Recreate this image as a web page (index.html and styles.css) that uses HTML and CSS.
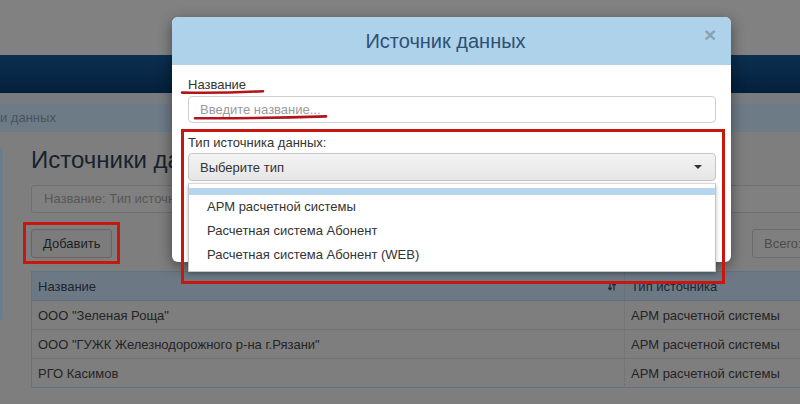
FILE: index.html
```html
<!DOCTYPE html>
<html lang="ru">
<head>
<meta charset="utf-8">
<title>Источники данных</title>
<link rel="stylesheet" href="styles.css">
</head>
<body>
<div class="page">
  <div class="topbar"></div>
  <div class="navbar"></div>
  <div class="subbar"></div>
  <div class="crumbs"><span>и данных</span></div>
  <div class="main">
    <aside class="side"></aside>
    <section class="content">
      <h1 class="title">Источники да</h1>
      <div class="filter">Название: Тип источника</div>
      <div class="toolbar">
        <button class="btn">Добавить</button>
        <button class="btn total">Всего: 3</button>
      </div>
      <table class="grid">
        <thead>
          <tr>
            <th class="c1"><div class="th-in"><span>Название</span>
              <svg class="sort" width="8" height="9" viewBox="0 0 8 9"><path d="M2 0.5v7M0.3 5.6L2 7.8 3.7 5.6M6 8.5v-7M4.3 3.4L6 1.2 7.7 3.4" fill="none" stroke="#222" stroke-width="1.2"/></svg>
            </div></th>
            <th class="c2">Тип источника</th>
          </tr>
        </thead>
        <tbody>
          <tr><td>ООО "Зеленая Роща"</td><td>АРМ расчетной системы</td></tr>
          <tr><td>ООО "ГУЖК Железнодорожного р-на г.Рязани"</td><td>АРМ расчетной системы</td></tr>
          <tr><td>РГО Касимов</td><td>АРМ расчетной системы</td></tr>
        </tbody>
      </table>
    </section>
  </div>
</div>

<div class="modal">
  <div class="modal-head">
    <h2 class="modal-title">Источник данных</h2>
    <span class="close">×</span>
  </div>
  <div class="modal-body">
    <label class="lbl">Название</label>
    <div class="input">Введите название...</div>
    <label class="lbl lbl2">Тип источника данных:</label>
    <div class="select-wrap">
      <div class="select"><span>Выберите тип</span><i class="caret"></i></div>
      <ul class="dropdown">
        <li class="hl"></li>
        <li>АРМ расчетной системы</li>
        <li>Расчетная система Абонент</li>
        <li>Расчетная система Абонент (WEB)</li>
      </ul>
    </div>
  </div>
</div>

<div class="mark mark-add"></div>
<div class="mark mark-type"></div>
<svg class="strokes" width="800" height="404" viewBox="0 0 800 404">
  <path d="M182 92.6 Q222 93.4 263 91.2" fill="none" stroke="#b3141a" stroke-width="2.6" stroke-linecap="round"/>
  <path d="M195 118.2 Q260 118.6 326 116.4" fill="none" stroke="#b3141a" stroke-width="2.6" stroke-linecap="round"/>
</svg>
</body>
</html>
```
FILE: styles.css
```css
html, body {
  margin: 0;
  padding: 0;
}
body {
  width: 800px;
  height: 404px;
  overflow: hidden;
  background: #7e7e7e;
  font-family: "Liberation Sans", Arial, sans-serif;
  font-size: 13px;
  color: #262626;
  position: relative;
}
.page {
  width: 800px;
}
.topbar {
  height: 55px;
  background: #818181;
}
.navbar {
  height: 38px;
  background: linear-gradient(#0c2f50, #03203a);
}
.subbar {
  height: 11px;
  background: #787c80;
}
.crumbs {
  height: 28px;
  background: #6d7b87;
  color: #48535d;
  font-size: 13px;
  line-height: 28px;
  white-space: nowrap;
}
.main {
  display: flex;
}
.side {
  flex: none;
  width: 3px;
  height: 173px;
  margin-top: 15px;
  background: #6a7d8f;
  border-radius: 0 3px 3px 0;
}
.content {
  flex: none;
  width: 800px;
  margin-left: 28px;
  padding-top: 14px;
}
.title {
  margin: 0;
  font-size: 24px;
  line-height: 28px;
  font-weight: normal;
  color: #17222e;
  white-space: nowrap;
}
.filter {
  margin-top: 11px;
  height: 26px;
  border: 1px solid #6f6f6f;
  border-radius: 3px;
  background: #808080;
  color: #575757;
  line-height: 26px;
  padding-left: 12px;
  white-space: nowrap;
}
.toolbar {
  margin-top: 16px;
  display: flex;
  justify-content: space-between;
}
.btn {
  height: 29px;
  padding: 0 11px;
  border: 1px solid #666;
  border-radius: 3px;
  background: #7c7c7c;
  color: #1e1e1e;
  font-family: "Liberation Sans", Arial, sans-serif;
  font-size: 13px;
  white-space: nowrap;
}
.btn.total {
  width: 79px;
  text-align: left;
  color: #4c4c4c;
  border-color: #6c6c6c;
  background: #7f7f7f;
}
.grid {
  margin-top: 13px;
  width: 100%;
  border-collapse: collapse;
  border: 1px solid #607283;
}
.grid th {
  height: 28px;
  padding: 0 6px;
  background: #6c7985;
  color: #1c2530;
  font-weight: normal;
  text-align: left;
  border-bottom: 1px solid #5f7080;
}
.grid th.c1 {
  width: 578px;
  padding-right: 8px;
  border-right: 1px solid #66727d;
}
.th-in {
  display: flex;
  align-items: center;
  justify-content: space-between;
}
.sort {
  display: block;
}
.grid td {
  height: 28px;
  padding: 0 6px;
  border-top: 1px solid #727272;
  background: #7e7e7e;
  color: #242424;
  white-space: nowrap;
}
.grid td + td {
  border-left: 1px solid #747474;
}

/* modal */
.modal {
  position: absolute;
  left: 172px;
  top: 17px;
  width: 559px;
  height: 245px;
  background: #fff;
  border-radius: 6px;
  box-shadow: 0 4px 14px rgba(0, 0, 0, 0.45);
}
.modal-head {
  height: 48px;
  background: #afd2eb;
  border-radius: 6px 6px 0 0;
  display: flex;
  align-items: center;
  padding: 0 15px;
}
.modal-title {
  flex: 1;
  margin: 0;
  text-align: center;
  font-size: 20px;
  font-weight: normal;
  color: #2d5074;
}
.close {
  width: 12px;
  font-size: 21px;
  font-weight: bold;
  line-height: 1;
  color: #8ba1b2;
  margin-top: -14px;
}
.modal-body {
  padding: 11px 15px 0 16px;
}
.lbl {
  display: block;
  line-height: 18px;
  color: #333;
  margin-bottom: 2px;
}
.lbl2 {
  margin-top: 11px;
  margin-bottom: 1px;
}
.input {
  height: 25px;
  border: 1px solid #cfcfcf;
  border-radius: 4px;
  padding-left: 11px;
  line-height: 25px;
  color: #9a9a9a;
}
.select-wrap {
  position: relative;
}
.select {
  height: 26px;
  border: 1px solid #c6c6c6;
  border-radius: 4px;
  background: linear-gradient(#f3f3f3, #e6e6e6);
  padding: 0 13px 0 11px;
  display: flex;
  align-items: center;
  justify-content: space-between;
  color: #333;
}
.caret {
  width: 0;
  height: 0;
  border-left: 4px solid transparent;
  border-right: 4px solid transparent;
  border-top: 4px solid #333;
}
.dropdown {
  position: absolute;
  left: 0;
  right: 0;
  top: 30px;
  margin: 0;
  padding: 4px 0 4px;
  list-style: none;
  background: #fff;
  border: 1px solid #c4c4c4;
  border-top-color: #d8d8d8;
  box-shadow: 0 2px 4px rgba(0, 0, 0, 0.25);
  z-index: 2;
}
.dropdown li {
  height: 24px;
  line-height: 24px;
  padding-left: 18px;
  color: #333;
}
.dropdown li.hl {
  height: 7px;
  background: #b6d6ed;
}

/* annotations */
.mark {
  position: absolute;
  border: 3px solid #c8170e;
  box-sizing: border-box;
  z-index: 5;
}
.mark-add {
  left: 23px;
  top: 222px;
  width: 97px;
  height: 42px;
}
.mark-type {
  left: 181px;
  top: 129px;
  width: 544px;
  height: 155px;
}
.strokes {
  position: absolute;
  left: 0;
  top: 0;
  z-index: 6;
  pointer-events: none;
}
```
